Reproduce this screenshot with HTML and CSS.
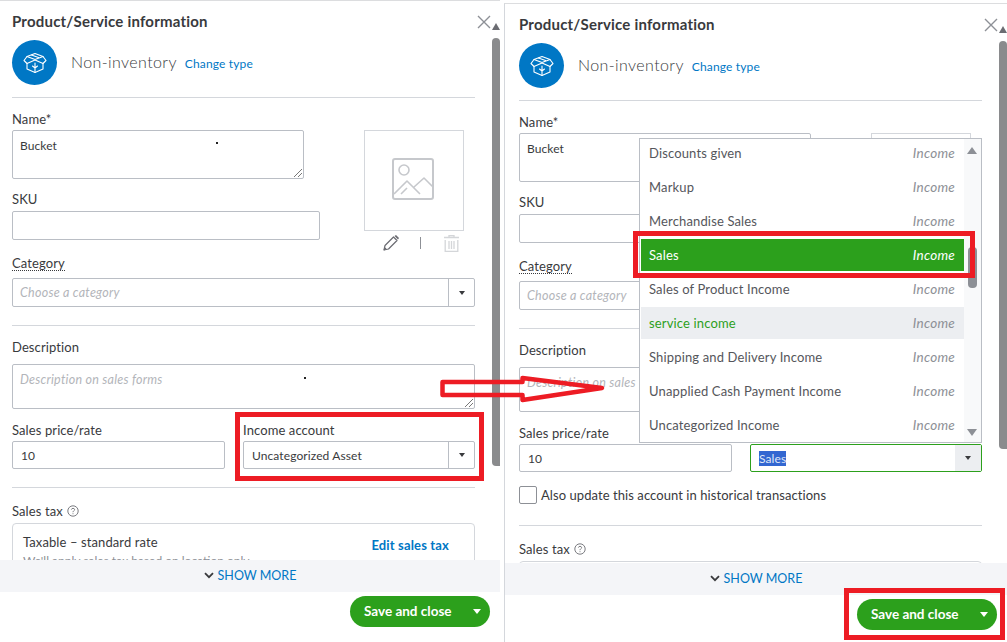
FILE: index.html
```html
<!DOCTYPE html>
<html lang="en">
<head>
<meta charset="utf-8">
<title>Product/Service information</title>
<link rel="stylesheet" href="styles.css">
</head>
<body>
<svg class="defs" width="0" height="0" aria-hidden="true">
  <symbol id="box" viewBox="0 0 24 24"><g fill="none" stroke="#fff" stroke-width="1.1" stroke-linejoin="round" stroke-linecap="round"><path d="M12 2.5 20 5.5 23 9.5 20 12.5V18L12 21.5 4 18V12.5L1 9.5 4 5.5Z"/><path d="M4 5.5 12 8.5 20 5.5M4 12.5 12 9 20 12.5M12 12V21.5M12 17 9.5 15M12 17 14.5 15M8.5 4 15.5 6.5"/></g></symbol>
  <symbol id="photo" viewBox="0 0 42 42"><g fill="none" stroke="#c6c8cc" stroke-width="1.6" stroke-linejoin="round"><rect x="1" y="1" width="40" height="40" rx="2" stroke-width="2"/><circle cx="12" cy="12" r="5"/><path d="M2 36 15 23 28 36M22 29 32 20 41 29"/><path d="M9 36 15 30" /></g></symbol>
  <symbol id="pencil" viewBox="0 0 16 16"><g fill="none" stroke="#6b6c72" stroke-width="1.2" stroke-linejoin="round"><path d="M1 15 2 10.5 10.5 2 14 5.5 5.5 14Z"/><path d="M1 15 3 13"/></g><path d="M11.5 1 13 0 16 3 15 4.5Z" fill="#6b6c72"/></symbol>
  <symbol id="trash" viewBox="0 0 15 17"><g fill="none" stroke="#d4d6d9" stroke-width="1.3"><path d="M0 2.5H15M5 2.5V.7H10V2.5M1.2 5V16.3H13.8V5M5 6V14M7.5 6V14M10 6V14"/></g></symbol>
  <symbol id="help" viewBox="0 0 12 12"><circle cx="6" cy="6" r="5.2" fill="none" stroke="#6b6c72" stroke-width=".9"/><path d="M4.4 4.6C4.5 2.9 7.6 2.9 7.6 4.6 7.6 5.8 6 5.8 6 7.2M6 8.3V9.2" fill="none" stroke="#6b6c72" stroke-width=".9"/></symbol>
  <symbol id="chev" viewBox="0 0 10 7"><path d="M1 1.2 5 5.2 9 1.2" fill="none" stroke="#393a3d" stroke-width="1.8"/></symbol>
  <symbol id="grip" viewBox="0 0 8 8"><path d="M0 8 8 0M4 8 8 4" stroke="#555" stroke-width=".8"/></symbol>
</svg>

<main class="stage">

  <section class="panel">
    <div class="form">
      <h1 class="title">Product/Service information</h1>
      <div class="type-row">
        <span class="type-icon"><svg class="i-box"><use href="#box"/></svg></span>
        <span class="type-name">Non-inventory</span>
        <a class="link change">Change type</a>
      </div>
      <hr class="rule rule-top">
      <div class="top-block">
        <div class="top-fields">
          <label class="lab">Name*</label>
          <div class="field area name-area">Bucket<svg class="grip"><use href="#grip"/></svg><i class="speck"></i></div>
          <label class="lab lab-sku">SKU</label>
          <div class="field sku"></div>
        </div>
        <div class="photo-col">
          <div class="photo"><svg class="i-photo"><use href="#photo"/></svg></div>
          <div class="photo-tools"><svg class="i-pencil"><use href="#pencil"/></svg><span class="tool-sep"></span><svg class="i-trash"><use href="#trash"/></svg></div>
        </div>
      </div>
      <label class="lab lab-cat"><span class="dotted">Category</span></label>
      <div class="field select"><span class="ph">Choose a category</span><span class="caret-cell"><i class="caret"></i></span></div>
      <hr class="rule rule-cat">
      <label class="lab lab-desc">Description</label>
      <div class="field area desc-area"><span class="ph">Description on sales forms</span><svg class="grip"><use href="#grip"/></svg><i class="speck speck-desc"></i></div>
      <div class="price-row">
        <div class="price-col">
          <label class="lab">Sales price/rate</label>
          <div class="field short">10</div>
        </div>
        <div class="account-col">
          <label class="lab">Income account</label>
          <div class="field select short"><span>Uncategorized Asset</span><span class="caret-cell"><i class="caret"></i></span></div>
        </div>
      </div>
      <hr class="rule rule-price">
      <label class="lab tax-lab">Sales tax <svg class="i-help"><use href="#help"/></svg></label>
      <div class="tax-box">
        <div class="tax-text"><div class="tax-name">Taxable – standard rate</div><div class="tax-note">We'll apply sales tax based on location only</div></div>
        <a class="link tax-edit">Edit sales tax</a>
      </div>
    </div>
    <div class="more"><svg class="i-chev"><use href="#chev"/></svg><a class="link more-link">SHOW MORE</a></div>
    <div class="actions"><div class="save"><span class="save-label">Save and close</span><span class="save-menu"><i class="caret caret-white"></i></span></div></div>
    <svg class="close" viewBox="0 0 14 14"><path d="M1 1 13 13M13 1 1 13" stroke="#8d9096" stroke-width="1.4"/></svg>
    <i class="sb-up"></i>
    <div class="sb-thumb"></div>
  </section>

  <section class="panel panel-b">
    <div class="form">
      <h1 class="title">Product/Service information</h1>
      <div class="type-row">
        <span class="type-icon"><svg class="i-box"><use href="#box"/></svg></span>
        <span class="type-name">Non-inventory</span>
        <a class="link change">Change type</a>
      </div>
      <hr class="rule rule-top">
      <div class="top-block">
        <div class="top-fields">
          <label class="lab">Name*</label>
          <div class="field area name-area">Bucket</div>
          <label class="lab lab-sku">SKU</label>
          <div class="field sku"></div>
        </div>
        <div class="photo-col">
          <div class="photo"></div>
        </div>
      </div>
      <label class="lab lab-cat"><span class="dotted">Category</span></label>
      <div class="field select"><span class="ph">Choose a category</span></div>
      <hr class="rule rule-cat">
      <label class="lab lab-desc">Description</label>
      <div class="field area desc-area"><span class="ph">Description on sales forms</span></div>
      <div class="price-row price-row-b">
        <div class="price-col">
          <label class="lab">Sales price/rate</label>
          <div class="field short">10</div>
        </div>
        <div class="account-col">
          <div class="field select short focus"><span class="picked">Sales</span><span class="caret-cell caret-focus"><i class="caret"></i></span></div>
        </div>
      </div>
      <div class="update-row"><span class="check"></span><span class="update-text">Also update this account in historical transactions</span></div>
      <hr class="rule rule-update">
      <label class="lab tax-lab">Sales tax <svg class="i-help"><use href="#help"/></svg></label>
      <div class="tax-box"></div>
    </div>
    <div class="more"><svg class="i-chev"><use href="#chev"/></svg><a class="link more-link">SHOW MORE</a></div>
    <div class="actions"><div class="save"><span class="save-label">Save and close</span><span class="save-menu"><i class="caret caret-white"></i></span></div></div>
    <svg class="close" viewBox="0 0 14 14"><path d="M1 1 13 13M13 1 1 13" stroke="#8d9096" stroke-width="1.4"/></svg>
    <i class="sb-up"></i>
    <div class="sb-thumb sb-thumb-b"></div>

    <div class="dropdown">
      <ul class="options">
        <li class="opt"><span>Discounts given</span><em>Income</em></li>
        <li class="opt"><span>Markup</span><em>Income</em></li>
        <li class="opt"><span>Merchandise Sales</span><em>Income</em></li>
        <li class="opt opt-on"><span>Sales</span><em>Income</em></li>
        <li class="opt"><span>Sales of Product Income</span><em>Income</em></li>
        <li class="opt opt-hover"><span>service income</span><em>Income</em></li>
        <li class="opt"><span>Shipping and Delivery Income</span><em>Income</em></li>
        <li class="opt"><span>Unapplied Cash Payment Income</span><em>Income</em></li>
        <li class="opt"><span>Uncategorized Income</span><em>Income</em></li>
      </ul>
      <div class="dd-track"><i class="dd-up"></i><div class="dd-thumb"></div><i class="dd-down"></i></div>
    </div>
  </section>

  <div class="mark mark-account"></div>
  <div class="mark mark-sales"></div>
  <div class="mark mark-save"></div>
  <svg class="arrow" viewBox="0 0 170 32"><path d="M4.5 8H84.5V4L164 14 84.5 26V21H4.5Z" fill="none" stroke="#ed1c24" stroke-width="4.5" stroke-linejoin="round"/></svg>
</main>
</body>
</html>
```
FILE: styles.css
```css
* { box-sizing: border-box; }
html, body { margin: 0; padding: 0; background: #fff; }
body { font-family: "Lato", "Liberation Sans", sans-serif; color: #393a3d; font-size: 13px; }
.defs { position: absolute; }
.stage { position: relative; width: 1007px; height: 642px; display: flex; gap: 4px; overflow: hidden; }

.panel { position: relative; width: 500px; height: 642px; border-top: 1px solid #dcdddf; flex: none; background: #fff; }
.panel-b { width: 503px; height: 639px; margin-top: 3px; border-left: 1px solid #d4d7dc; padding-left: 2px; }
.form { height: 559px; overflow: hidden; padding: 10px 25px 0 12px; }

.title { margin: 0; font-size: 15px; line-height: 20px; font-weight: 700; color: #393a3d; letter-spacing: .2px; }
.type-row { display: flex; align-items: center; height: 45px; margin-top: 9px; }
.type-icon { width: 45px; height: 45px; border-radius: 50%; background: #0077c5; display: flex; align-items: center; justify-content: center; flex: none; }
.i-box { width: 24px; height: 24px; }
.type-name { margin-left: 14px; font-size: 16px; letter-spacing: .4px; color: #393a3d; font-weight: 300; position: relative; top: -1px; }
.link { color: #0077c5; }
.change { margin-left: 8px; font-size: 12px; letter-spacing: .15px; position: relative; top: 1px; }

.rule { border: 0; height: 1px; background: #d4d7dc; margin: 0; }
.rule-top { margin-top: 12px; }
.rule-cat { margin-top: 18px; }
.rule-price { margin-top: 18px; }
.rule-update { margin-top: 21px; }

.lab { display: block; font-size: 13px; letter-spacing: .1px; line-height: 16px; margin-bottom: 3px; }
.lab-sku { margin-top: 12px; margin-bottom: 4px; }
.lab-cat { margin-top: 0; margin-bottom: 7px; }
.dotted { border-bottom: 1px dotted #393a3d; display: inline-block; line-height: 14px; }
.lab-desc { margin-top: 13px; margin-bottom: 9px; }
.tax-lab { margin-top: 15px; margin-bottom: 4px; display: flex; align-items: center; gap: 4px; }

.field { border: 1px solid #babec5; border-radius: 2px; background: #fff; font-size: 12px; letter-spacing: .1px; position: relative; }
.area { padding: 8px 7px; line-height: 14px; }
.name-area { width: 292px; height: 49px; }
.sku { width: 308px; height: 29px; }
.desc-area { height: 45px; }
.ph { font-style: italic; font-size: 12.5px; letter-spacing: .25px; color: #b3b5ba; }
.select { height: 29px; display: flex; align-items: center; justify-content: space-between; padding-left: 7px; }
.short { height: 28px; padding-left: 8px; display: flex; align-items: center; justify-content: space-between; }
.caret-cell { width: 26px; align-self: stretch; border-left: 1px solid #babec5; display: flex; align-items: center; justify-content: center; flex: none; }
.caret { width: 0; height: 0; border-left: 3.5px solid transparent; border-right: 3.5px solid transparent; border-top: 4px solid #393a3d; }
.caret-white { border-top-color: #fff; border-left-width: 4px; border-right-width: 4px; border-top-width: 5px; }
.grip { position: absolute; right: 1px; bottom: 1px; width: 8px; height: 8px; }
.speck { position: absolute; left: 203px; top: 11px; width: 2px; height: 2px; background: #222; }
.speck-desc { left: 291px; top: 12px; }

.top-block { display: flex; margin-top: 13px; height: 144px; }
.top-fields { width: 352px; flex: none; }
.photo-col { width: 100px; }
.photo { width: 100px; height: 101px; margin-top: 19px; border: 1px solid #d4d7dc; display: flex; align-items: center; justify-content: center; }
.i-photo { width: 42px; height: 42px; margin-bottom: 3px; margin-right: 3px; }
.photo-tools { display: flex; align-items: center; margin-top: 4px; height: 16px; padding-left: 19px; }
.i-pencil { width: 16px; height: 16px; }
.tool-sep { width: 1px; height: 12px; background: #8d9096; margin-left: 21px; }
.i-trash { width: 15px; height: 17px; margin-left: 23px; }

.price-row { display: flex; gap: 18px; margin-top: 13px; }
.price-col { width: 213px; flex: none; }
.account-col { flex: 1; }
.price-row-b { align-items: flex-end; }
.focus { border-color: #2ca01c; padding-left: 8px; }
.picked { background: #3367d1; color: #dfe6f7; }
.caret-focus { background: #eceef1; border-left: 0; }

.update-row { display: flex; align-items: center; margin-top: 14px; height: 18px; gap: 4px; }
.check { width: 18px; height: 18px; border: 1px solid #8d9096; border-radius: 2px; flex: none; }
.update-text { font-size: 13px; letter-spacing: .07px; }

.i-help { width: 12px; height: 12px; }
.tax-box { height: 70px; border: 1px solid #d4d7dc; border-radius: 4px; padding: 10px 25px 0 10px; display: flex; justify-content: space-between; }
.tax-name { font-size: 13px; letter-spacing: .1px; line-height: 16px; }
.tax-note { font-size: 12px; color: #8d9096; margin-top: 4px; line-height: 14px; }
.tax-edit { font-size: 13px; letter-spacing: .15px; font-weight: 700; margin-top: 3px; line-height: 16px; }

.more { height: 32px; background: #f4f5f8; display: flex; align-items: center; justify-content: center; gap: 4px; padding-bottom: 1px; }
.panel-b .more { margin-left: -2px; }
.i-chev { width: 10px; height: 7px; }
.more-link { font-size: 12.5px; }
.actions { display: flex; justify-content: flex-end; padding: 4px 10px 0 0; }
.save { width: 140px; height: 31px; border-radius: 16px; background: #2ca01c; color: #fff; display: flex; align-items: center; justify-content: space-between; font-weight: 700; font-size: 13.5px; padding-bottom: 1px; }
.save-label { padding-left: 14px; }
.save-menu { width: 26px; align-self: stretch; display: flex; align-items: center; justify-content: center; }

.close { position: absolute; right: 9px; top: 14px; width: 14px; height: 14px; }
.sb-up { position: absolute; right: 0; top: 22px; width: 0; height: 0; border-left: 4px solid transparent; border-right: 4px solid transparent; border-bottom: 7px solid #6b6c72; }
.sb-thumb { position: absolute; right: 0; top: 37px; width: 8px; height: 428px; border-radius: 4px 4px 0 4px; background: #8a8b8d; }
.sb-thumb-b { height: 408px; }

.dropdown { position: absolute; left: 134px; top: 134px; width: 343px; height: 305px; border: 1px solid #babec5; background: #fff; display: flex; padding-left: 1px; overflow: hidden; }
.options { list-style: none; margin: -2px 0 0; padding: 0; width: 323px; display: flex; flex-direction: column; gap: 2px; }
.opt { height: 32px; flex: none; display: flex; align-items: center; justify-content: space-between; padding: 0 9px 0 8px; font-size: 13px; letter-spacing: .15px; color: #55565b; }
.opt em { color: #8d9096; font-size: 13.5px; letter-spacing: .25px; }
.opt-on { background: #2ca01c; color: #fff; }
.opt-on em { color: #fff; }
.opt-hover { background: #eceef1; color: #2ca01c; }
.dd-track { position: relative; flex: 1; background: #f8f9fa; }
.dd-up { position: absolute; left: 3px; top: 8px; border-left: 5px solid transparent; border-right: 5px solid transparent; border-bottom: 7px solid #8d9096; }
.dd-down { position: absolute; left: 3px; bottom: 6px; border-left: 5px solid transparent; border-right: 5px solid transparent; border-top: 7px solid #8d9096; }
.dd-thumb { position: absolute; left: 4px; top: 108px; width: 9px; height: 41px; border-radius: 4px; background: #8d9096; }

.mark { position: absolute; border: 5px solid #ed1c24; }
.mark-account { left: 235px; top: 412px; width: 249px; height: 69px; }
.mark-sales { left: 633px; top: 231px; width: 342px; height: 47px; }
.mark-save { left: 844px; top: 588px; width: 161px; height: 52px; }
.arrow { position: absolute; left: 438px; top: 374px; width: 170px; height: 32px; }
```
